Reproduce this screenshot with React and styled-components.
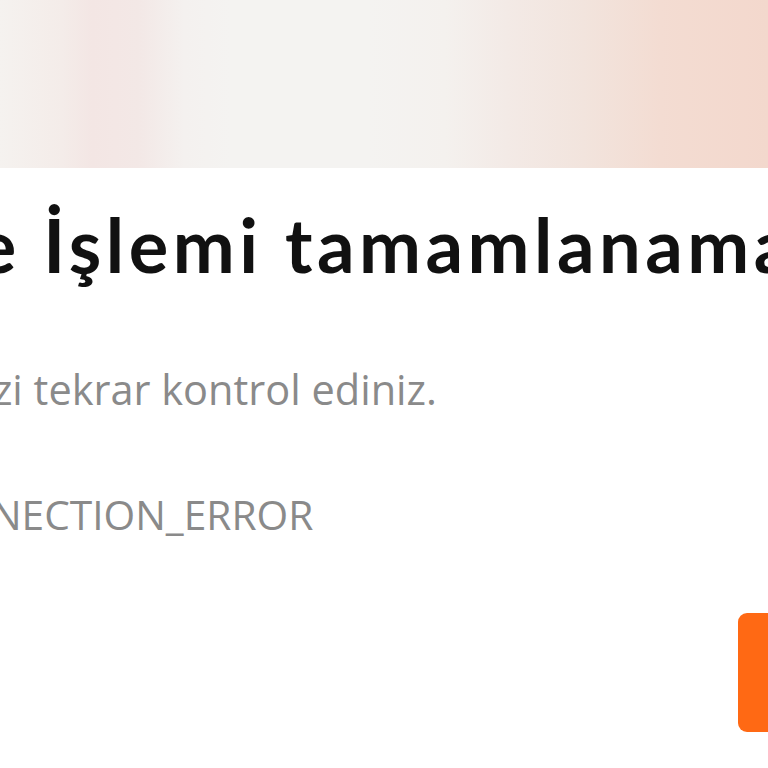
import React from 'react'
import styled, {createGlobalStyle} from 'styled-components'

const GlobalStyle = createGlobalStyle`
  html, body {
    margin: 0;
    padding: 0;
    background: #fff;
    overflow: hidden;
  }
  body {
    width: 768px;
    height: 768px;
  }
`

const Modal = styled.div`
  width: 768px;
  height: 768px;
  display: flex;
  flex-direction: column;
  background: #fff;
  overflow: hidden;
`

const Banner = styled.div`
  height: 168px;
  flex-shrink: 0;
  background: linear-gradient(
    90deg,
    #f5f2ef 0%,
    #f4ece9 8%,
    #f3e6e4 12%,
    #f3e8e6 18%,
    #f4f1ef 24%,
    #f4f3f1 30%,
    #f4f3f1 48%,
    #f4f1ee 58%,
    #f3eae6 66%,
    #f2e4dd 76%,
    #f3dcd2 86%,
    #f3d8cd 100%
  );
`

const Body = styled.div`
  flex: 1;
  display: flex;
  flex-direction: column;
  padding-top: 32px;
`

const Line = styled.div`
  white-space: nowrap;
  margin-left: ${({shift}) => shift}px;
`

const Title = styled(Line)`
  font-family: 'Lato', 'Noto Sans', sans-serif;
  font-weight: 700;
  font-size: 74px;
  line-height: 90px;
  color: #111;
  letter-spacing: 4.5px;
`

const Message = styled(Line)`
  font-family: 'Open Sans', 'Noto Sans', sans-serif;
  font-size: ${({size}) => size}px;
  line-height: 52px;
  color: #8a8a8a;
  margin-top: ${({gap}) => gap}px;
`

const Footer = styled.div`
  display: flex;
  justify-content: flex-end;
  margin-top: 73px;
  margin-right: -120px;
`

const RetryButton = styled.button`
  width: 150px;
  height: 119px;
  border: none;
  border-radius: 9px;
  background: #ff6914;
  color: #fff;
  font-family: 'Open Sans', sans-serif;
  font-size: 32px;
`

export default function App() {
  return (
    <>
      <GlobalStyle />
      <Modal>
        <Banner />
        <Body>
          <Title shift={-244}>Ödeme İşlemi tamamlanamadı</Title>
          <Message shift={-319} gap={73} size={41.5}>
            Lütfen bilgilerinizi tekrar kontrol ediniz.
          </Message>
          <Message shift={-97} gap={73} size={40.7}>
            CONNECTION_ERROR
          </Message>
          <Footer>
            <RetryButton aria-label="Tekrar dene" />
          </Footer>
        </Body>
      </Modal>
    </>
  )
}
